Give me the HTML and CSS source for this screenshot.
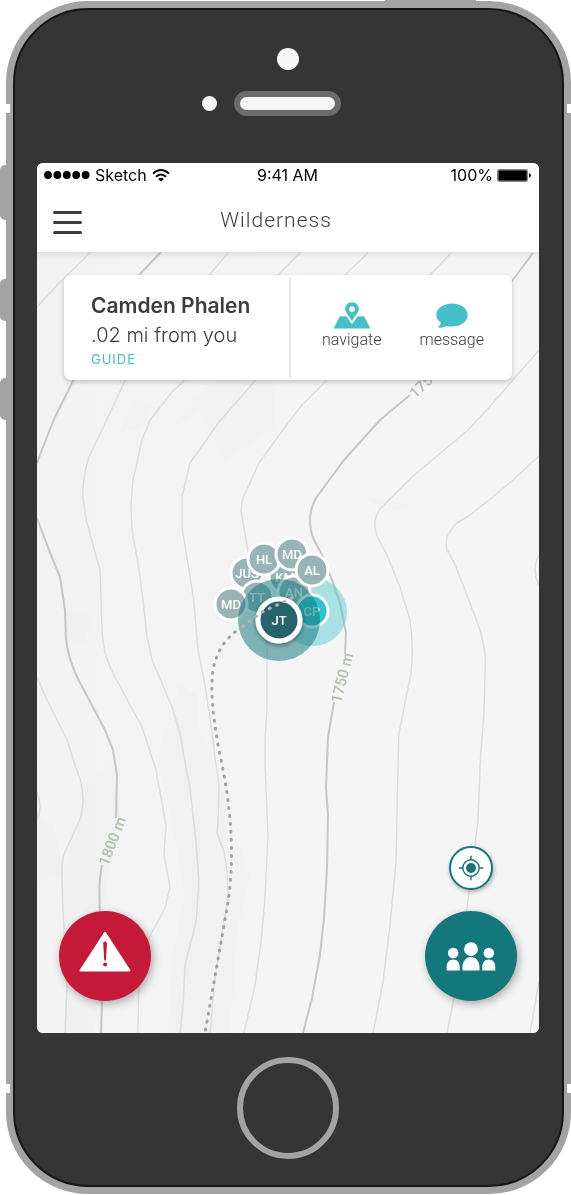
FILE: index.html
```html
<!DOCTYPE html>
<html lang="en">
<head>
<meta charset="utf-8">
<meta name="viewport" content="width=device-width, initial-scale=1">
<title>Wilderness</title>
<link rel="stylesheet" href="styles.css">
</head>
<body>
<div class="stage">
  <span class="side-key side-key-top"></span>
  <span class="side-key side-key-mute"></span>
  <span class="side-key side-key-up"></span>
  <span class="side-key side-key-down"></span>
  <div class="phone">
    <span class="notch notch-left notch-upper"></span>
    <span class="notch notch-right notch-upper"></span>
    <span class="notch notch-left notch-lower"></span>
    <span class="notch notch-right notch-lower"></span>
    <div class="phone-top">
      <span class="camera"></span>
      <div class="ear-row">
        <span class="sensor"></span>
        <span class="speaker"></span>
      </div>
    </div>

    <main class="screen">
      <div class="status-bar">
        <div class="status-left">
          <svg width="46" height="8" viewBox="0 0 46 8" aria-hidden="true"><circle cx="4" cy="4" r="3.900"/><circle cx="13.400" cy="4" r="3.900"/><circle cx="22.800" cy="4" r="3.900"/><circle cx="32.200" cy="4" r="3.900"/><circle cx="41.600" cy="4" r="3.900"/></svg>
          <span>Sketch</span>
          <svg width="18" height="13" viewBox="0 0 18 13" aria-hidden="true"><g fill="none" stroke="#000" stroke-width="1.900"><path d="M1 4.600Q9-2.400 17 4.600"/><path d="M3.900 7.800Q9 3.200 14.100 7.800"/></g><path d="M6.200 9.900Q9 7.600 11.800 9.900L9 12.600Z"/></svg>
        </div>
        <span class="status-time">9:41 AM</span>
        <div class="status-right">
          <span>100%</span>
          <svg width="34" height="13" viewBox="0 0 34 13" aria-hidden="true"><rect x=".8" y=".8" width="29.600" height="11.400" rx="1.600" fill="#000" stroke="#858585" stroke-width="1.500"/><path d="M32 4.200q1.900.6 1.900 2.300T32 8.800z"/></svg>
        </div>
      </div>
      <header class="nav-bar">
        <button class="menu-button" type="button" aria-label="Menu"><span></span><span></span><span></span></button>
        <h1 class="title">Wilderness</h1>
      </header>

      <section class="map" aria-label="Trail map">
        <svg class="map-canvas" viewBox="37 252 502 781">
          <defs>
            <linearGradient id="land"><stop offset="0" stop-color="#f2f2f2"/><stop offset=".45" stop-color="#f4f4f4"/><stop offset=".6" stop-color="#f5f5f5"/></linearGradient>
            <filter id="drop" x="-30%" y="-30%" width="160%" height="160%"><feDropShadow dx="0" dy="2" stdDeviation="2" flood-opacity=".4"/></filter>
          </defs>
          <rect x="37" y="252" width="502" height="781" fill="url(#land)"/>
          <g class="relief">
            <path d="M134 400l20 2-12 26-22 4z"/>
            <path d="M171 426l30-15 23 50 50-34v-46h-60z" opacity=".5"/>
            <path d="M65 608l27 8-8 26-19-2z"/>
            <path d="M180 685l18 10 0 34 20 40 14 60 18 46-14 60-6 98h-62l5-80 12-60-14-76-14-60z"/>
            <path d="M88 778l28-14 4 60-14 60-12 149H67l-4-160 14-50z"/>
            <path d="M37 815l16 10 12 50-28 7z" opacity=".6"/>
            <path d="M366 497l44 8-22 7z" opacity=".7"/>
          </g>
          <g class="contour">
            <path d="M91 252L62 280 37 307"/>
            <path d="M228 253L210 274 125 381 89 457Q82 478 83 500L87 523 100 570 102 630Q103 656 115 677L142 727 156 770 160 792 166 825 164 855 170 887 165 908 152 932 139 960 138 1033"/>
            <path d="M300 253L279 274 184 381 172 392 150 420 142 440 133 480 131 505 132 530 138 563 143 600 147 637 152 660 172 707 180 733 186 768 190 788 196 842 199 882 196 922 185 965 183 1005 180 1033"/>
            <path d="M368 253L346 274 255 381 219 422 190 463 182 497 182 527 189 570 194 603 198 650 204 680 210 717 216 765 219 785 218 822 217 833 224 852 227 872 228 898 223 928 215 978 210 1033"/>
            <path d="M451 253L431 274 326 381 302 405 285 427 259 463 243 498 241 510 248 552 262 600 267 633 267 707 265 740 265 765 268 835 265 898 261 942 255 985 244 1033"/>
            <path d="M539 350L485 412 467 431 412 477 382 507Q370 520 378 538L387 555 400 587 410 620Q414 646 411 673L405 703 399 733 398 765 396 862 390 925 383 982 373 1033"/>
            <path d="M539 456L513 480 489 500 470 515 457 523Q443 536 447 550L454 562 465 590 479 627Q487 652 485 673L484 713 481 750 480 768 478 820 475 845 467 908 454 998 447 1033"/>
            <path d="M539 555Q531 569 539 585M539 982L530 1033"/>
            <path d="M37 677L47 700 67 740 76 768 81 782Q85 800 81 817L65 852Q61 862 62 880L63 912 67 985 65 1033M37 792Q43 808 37 820"/>
          </g>
          <g class="contour contour-major">
            <path d="M161 252L140 274 73 381 55 417 43 447 37 463M37 518L49 550 60 577 65 610 66 640Q69 660 77 677L105 730 113 750 117 775 116 818M102 865Q98 882 100 912L102 1002 101 1033"/>
            <path d="M533 253L512 281 430 378M410 395L380 420 344 460 316 498Q305 518 314 540L323 557 332 580 340 603 346 633 345 654M334 702L328 737 326 788 328 815 327 868 324 918 320 955 312 998 303 1033"/>
          </g>
          <g class="elevation">
            <text transform="translate(117 843) rotate(-69)" text-anchor="middle">1800 m</text>
            <text transform="translate(347 679) rotate(-76)" text-anchor="middle">1750 m</text>
            <text transform="translate(415 399) rotate(-43)">1750 m</text>
          </g>
          <g class="pin">
            <circle cx="247" cy="573" r="16"/><text x="247" y="578">JUS</text>
            <circle cx="285" cy="577" r="16"/><text x="285" y="582">KM</text>
            <circle cx="264" cy="559" r="16"/><text x="264" y="564">HL</text>
            <circle cx="257" cy="597" r="16"/><text x="257" y="602">TT</text>
            <circle cx="231" cy="604" r="16"/><text x="231" y="609">MD</text>
            <circle cx="292" cy="554" r="16"/><text x="292" y="559">MD</text>
          </g>
          <circle cx="313" cy="612" r="34" fill="#41c3cb" opacity=".42"/>
          <g class="pin">
            <circle cx="294" cy="592" r="16"/><text x="294" y="597">AN</text>
            <circle cx="312" cy="570" r="16"/><text x="312" y="575">AL</text>
          </g>
          <g class="pin pin-guide"><circle cx="312" cy="611" r="16"/><text x="312" y="616">CP</text></g>
          <circle cx="279" cy="620" r="41" fill="#12767b" opacity=".52"/>
          <g class="pin pin-self"><circle cx="279" cy="620" r="21" filter="url(#drop)"/></g>
          <path class="route" d="M242 627Q217 643 213 671Q209 696 219 750Q239 840 227 908Q217 965 205 1033"/>
          <path class="route route-near" d="M292 598L262 612 242 627"/>
          <g class="pin pin-self"><text x="279" y="625">JT</text></g>
        </svg>

        <div class="overlay">
          <article class="card">
            <div class="person">
              <h2 class="name">Camden Phalen</h2>
              <p class="distance">.02 mi from you</p>
              <p class="role">GUIDE</p>
            </div>
            <div class="actions">
              <button class="action" type="button">
                <svg width="36" height="27" viewBox="0 0 36 27" aria-hidden="true"><path fill-rule="evenodd" d="M18 .2c4.100 0 6.800 2.900 6.800 6.600 0 4.200-4.400 7.900-6.800 12.400-2.400-4.500-6.800-8.200-6.800-12.400C11.200 3.100 13.900.2 18 .2zm0 4a2.900 2.900 0 1 0 0 5.800 2.900 2.900 0 0 0 0-5.800z"/><path d="M6.800 14.300h5.500L18 22.300l5.700-8h5.500q.9 0 1.400.9l5.300 10.200q.5 1-.6 1H.7q-1.100 0-.6-1l5.300-10.200q.5-.9 1.400-.9z"/></svg>
                <span>navigate</span>
              </button>
              <button class="action" type="button">
                <svg width="32" height="27" viewBox="0 0 32 27" aria-hidden="true"><path d="M16 1.400c8.800 0 15.700 5 15.700 11.600S24.800 24.600 16 24.600c-2 0-3.900-.2-5.500-.7-2.200 1.200-5 1.900-7.600 1.800-.8 0-.8-.7-.3-1.100 1.200-1.100 2.100-2.500 2.200-3.800C2 18.700.3 16 .3 13 .3 6.400 7.200 1.400 16 1.400z"/></svg>
                <span>message</span>
              </button>
            </div>
          </article>

          <div class="controls">
            <button class="fab fab-alert" type="button" aria-label="Send alert">
              <svg width="52" height="41" viewBox="0 0 52 41" aria-hidden="true"><path d="M26 1.800L50.500 39.500H1.500z" fill="#fff" stroke="#fff" stroke-width="2" stroke-linejoin="round"/><path d="M24.200 12.500q0-2 1.900-2t1.900 2l-1.100 17h-1.600z" fill="#c41a37"/><circle cx="26.100" cy="33.500" r="2" fill="#c41a37"/></svg>
            </button>
            <div class="control-stack">
              <button class="locate" type="button" aria-label="Center on my location">
                <svg width="26" height="26" viewBox="0 0 26 26" aria-hidden="true"><g fill="none" stroke="#12767b" stroke-width="1.400"><circle cx="13" cy="13" r="8.200"/><path d="M13 .7v4.100M13 21.200v4.100M.7 13h4.100M21.200 13h4.100"/></g><circle cx="13" cy="13" r="5" fill="#12767b"/></svg>
              </button>
              <button class="fab fab-group" type="button" aria-label="Show group">
                <svg width="50" height="29" viewBox="0 0 50 29" fill="#fff" aria-hidden="true"><circle cx="25" cy="7.200" r="6.900"/><circle cx="7.200" cy="11" r="5.300"/><circle cx="42.800" cy="11" r="5.300"/><path d="M16.500 28.500V25c0-5 3.200-10 8.500-10s8.500 5 8.500 10v3.500zM.7 28.500V25c0-4.300 2.300-7.600 6.500-7.600s6.500 3.300 6.500 7.600v3.500zM36.300 28.500V25c0-4.300 2.300-7.600 6.500-7.600s6.500 3.300 6.500 7.600v3.500z"/></svg>
              </button>
            </div>
          </div>
        </div>
      </section>
    </main>

    <button class="home-button" type="button" aria-label="Home"></button>
  </div>
</div>
</body>
</html>
```
FILE: styles.css
```css
* {
  box-sizing: border-box;
}

body {
  margin: 0;
  background: #fff;
  color: #3c3c3c;
  font-family: Roboto, "Liberation Sans", sans-serif;
}

button {
  padding: 0;
  border: 0;
  background: none;
  color: inherit;
  font: inherit;
  cursor: pointer;
}

h1,
h2,
p {
  margin: 0;
}

svg {
  display: block;
}

/* Device */
.stage {
  position: relative;
  padding: 1px 0 0 6px;
  overflow: hidden;
}

.phone {
  position: relative;
  display: flex;
  flex-direction: column;
  padding: 0 2px 28px 0;
  border: 7px solid #a3a3a3;
  border-radius: 82px;
  background: #353535;
  box-shadow: inset 0 0 0 2px #161616;
}

.side-key {
  position: absolute;
  left: 0;
  width: 12px;
  height: 42px;
  border-radius: 5px;
  background: #a3a3a3;
}

.side-key-top {
  top: 0;
  left: 385px;
  width: 91px;
  height: 4px;
  border-radius: 0;
}

.side-key-mute {
  top: 165px;
  height: 55px;
}

.side-key-up {
  top: 279px;
}

.side-key-down {
  top: 378px;
}

.notch {
  position: absolute;
  width: 4px;
  height: 9px;
  background: #fff;
}

.notch-left {
  left: -7px;
}

.notch-right {
  right: -7px;
}

.notch-upper {
  top: 96px;
}

.notch-lower {
  bottom: 94px;
}

.phone-top {
  display: flex;
  flex-direction: column;
  align-items: center;
  gap: 21px;
  height: 155px;
  padding-top: 40px;
}

.camera {
  width: 22px;
  height: 22px;
  border-radius: 50%;
  background: #f7f7f7;
}

.ear-row {
  display: grid;
  grid-template-columns: 1fr auto 1fr;
  align-items: center;
  gap: 17px;
  width: 100%;
}

.sensor {
  justify-self: end;
  width: 15px;
  height: 15px;
  border-radius: 50%;
  background: #f7f7f7;
}

.speaker {
  width: 107px;
  height: 25px;
  border: 6px solid #6b6b6b;
  border-radius: 13px;
  background: #f7f7f7;
}

.home-button {
  align-self: center;
  width: 102px;
  height: 102px;
  margin-top: 24px;
  border: 6px solid #a3a3a3;
  border-radius: 50%;
}

/* Screen */
.screen {
  margin: 0 23px 0 24px;
  border-radius: 6px;
  background: #fff;
  overflow: hidden;
}

.status-bar {
  position: relative;
  z-index: 2;
  display: grid;
  grid-template-columns: 1fr auto 1fr;
  align-items: center;
  height: 24px;
  padding: 0 8px 0 7px;
  background: #fff;
  color: #000;
  font: 400 16px/24px Inter, sans-serif;
}

.status-left,
.status-right {
  display: flex;
  align-items: center;
  gap: 5px;
}

.status-right {
  justify-content: flex-end;
  gap: 4px;
}

.nav-bar {
  position: relative;
  z-index: 1;
  display: grid;
  grid-template-columns: 60px 1fr 84px;
  align-items: center;
  height: 65px;
  background: #fff;
  box-shadow: 0 1px 8px rgba(0, 0, 0, .14);
}

.menu-button {
  display: flex;
  flex-direction: column;
  gap: 7px;
  width: 29px;
  margin-left: 16px;
  padding-top: 6px;
}

.menu-button span {
  width: 29px;
  height: 3px;
  border-radius: 2px;
  background: #3c3c3c;
}

.title {
  font-size: 21px;
  font-weight: 300;
  letter-spacing: 1px;
  line-height: 24px;
  text-align: center;
}

/* Map */
.map {
  position: relative;
}

.map-canvas {
  width: 100%;
  height: auto;
}

.relief {
  fill: #eeeeee;
  opacity: .55;
}

.contour {
  fill: none;
  stroke: #dcdcdc;
  stroke-width: 1.5;
  stroke-linejoin: round;
}

.contour-major {
  stroke: #c6c6c6;
  stroke-width: 2;
}

.elevation {
  fill: #b3bfab;
  font: 500 15px Roboto, sans-serif;
}

.route {
  fill: none;
  stroke: #a0a5a4;
  stroke-width: 3;
  stroke-linecap: round;
  stroke-dasharray: 1 7;
}

.route-near {
  stroke: #b9b4b4;
}

.pin {
  fill: #98b4b7;
  font: 500 13px Roboto, sans-serif;
}

.pin circle {
  stroke: #fff;
  stroke-width: 3;
}

.pin text {
  fill: #fff;
  text-anchor: middle;
}

.pin-guide {
  fill: #2cc3cb;
}

.pin-guide text {
  fill: #c3eaec;
}

.pin-self {
  fill: #27646a;
}

.pin-self circle {
  stroke-width: 5;
}

.overlay {
  position: absolute;
  inset: 0;
  display: flex;
  flex-direction: column;
  justify-content: space-between;
  padding: 23px 22px 32px;
}

.card {
  display: flex;
  align-items: stretch;
  margin: 0 5px;
  border-radius: 7px;
  background: #fff;
  box-shadow: 0 2px 5px rgba(0, 0, 0, .22);
}

.person {
  flex: 1;
  padding: 16px 0 11px 27px;
  font-family: Inter, sans-serif;
}

.name {
  font-size: 21px;
  font-weight: 600;
  line-height: 30px;
}

.distance {
  font-size: 20px;
  font-weight: 300;
  line-height: 28px;
}

.role {
  color: #41c1c9;
  font-size: 13px;
  letter-spacing: 1px;
  line-height: 20px;
}

.actions {
  display: flex;
  justify-content: center;
  gap: 38px;
  width: 223px;
  margin: 2px 0;
  padding-left: 3px;
  border-left: 2px solid #e8e8e8;
}

.action {
  display: flex;
  flex-direction: column;
  align-items: center;
  gap: 1px;
  padding-top: 25px;
  font-size: 16px;
  font-weight: 300;
  line-height: 20px;
}

.action svg {
  fill: #45c0c9;
}

.controls {
  display: flex;
  align-items: flex-end;
  justify-content: space-between;
}

.control-stack {
  display: flex;
  flex-direction: column;
  align-items: center;
  gap: 21px;
}

.fab,
.locate {
  display: grid;
  place-items: center;
  border-radius: 50%;
  box-shadow: 2px 3px 8px rgba(0, 0, 0, .3);
}

.fab {
  width: 92px;
  height: 90px;
}

.fab-alert {
  padding-bottom: 9px;
  background: #c41a37;
}

.fab-group {
  background: #14777c;
}

.locate {
  width: 44px;
  height: 44px;
  border: 2px solid #14777c;
  background: #fff;
  box-shadow: 1px 2px 4px rgba(0, 0, 0, .3);
}
```
